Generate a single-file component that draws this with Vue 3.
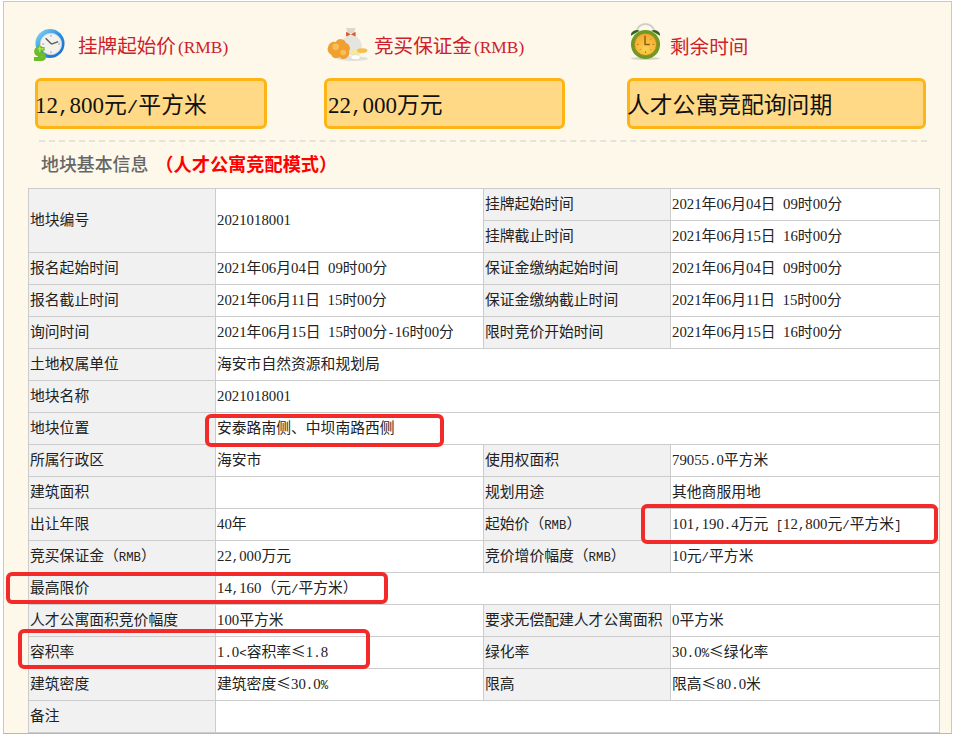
<script setup>
const split = (s) =>
  (s.match(/[0-9]+|[\x20-\x2f\x3a-\x7e]+|[^\x20-\x7e]+/g) || []).map((t) => ({
    t,
    kind: /^[0-9]/.test(t) ? 'dig' : /^[\x20-\x7e]/.test(t) ? 'mono' : 'cjk'
  }))

const stats = [
  { key: 'a', title: '挂牌起始价(RMB)', value: '12,800元/平方米' },
  { key: 'b', title: '竞买保证金(RMB)', value: '22,000万元' },
  { key: 'c', title: '剩余时间', value: '人才公寓竞配询问期' }
]

const L = (t, rowspan) => ({ t, label: true, rowspan })
const V = (t, colspan, rowspan) => ({ t, colspan, rowspan })

const rows = [
  [L('地块编号', 2), V('2021018001', 1, 2), L('挂牌起始时间'), V('2021年06月04日 09时00分')],
  [L('挂牌截止时间'), V('2021年06月15日 16时00分')],
  [L('报名起始时间'), V('2021年06月04日 09时00分'), L('保证金缴纳起始时间'), V('2021年06月04日 09时00分')],
  [L('报名截止时间'), V('2021年06月11日 15时00分'), L('保证金缴纳截止时间'), V('2021年06月11日 15时00分')],
  [L('询问时间'), V('2021年06月15日 15时00分-16时00分'), L('限时竞价开始时间'), V('2021年06月15日 16时00分')],
  [L('土地权属单位'), V('海安市自然资源和规划局', 3)],
  [L('地块名称'), V('2021018001', 3)],
  [L('地块位置'), V('安泰路南侧、中坝南路西侧', 3)],
  [L('所属行政区'), V('海安市'), L('使用权面积'), V('79055.0平方米')],
  [L('建筑面积'), V(''), L('规划用途'), V('其他商服用地')],
  [L('出让年限'), V('40年'), L('起始价（RMB）'), V('101,190.4万元 [12,800元/平方米]')],
  [L('竞买保证金（RMB）'), V('22,000万元'), L('竞价增价幅度（RMB）'), V('10元/平方米')],
  [L('最高限价'), V('14,160（元/平方米）', 3)],
  [L('人才公寓面积竞价幅度'), V('100平方米'), L('要求无偿配建人才公寓面积'), V('0平方米')],
  [L('容积率'), V('1.0<容积率≤1.8'), L('绿化率'), V('30.0%≤绿化率')],
  [L('建筑密度'), V('建筑密度≤30.0%'), L('限高'), V('限高≤80.0米')],
  [L('备注'), V('', 3)]
]
</script>

<template>
  <div class="page">
    <section class="panel">
      <div class="stats">
        <div v-for="s in stats" :key="s.key" class="stat" :class="'stat-' + s.key">
          <div class="stat-head">
            <svg v-if="s.key === 'a'" class="icon" width="34" height="32" viewBox="0 0 35 33">
              <defs>
                <linearGradient id="ringA" x1="0" y1="0" x2="1" y2="1">
                  <stop offset="0" stop-color="#8fe0f5" />
                  <stop offset=".5" stop-color="#2a8fe6" />
                  <stop offset="1" stop-color="#1565c8" />
                </linearGradient>
              </defs>
              <circle cx="18.500" cy="15" r="15" fill="url(#ringA)" />
              <circle cx="19.500" cy="15.500" r="11" fill="#f4f2ea" stroke="#c8d4dc" />
              <path d="M20 15.500l-6-6M20 15.500l7-2.500" stroke="#5a5a5a" stroke-width="1.400" fill="none" />
              <path d="M19.500 6v2M29 15.500h-2M19.500 25v-2M10.500 15.500h2" stroke="#999" fill="none" />
              <path d="M13 20.500H6a3 3 0 0 0 0 5.500h4a2.500 2.500 0 0 1 0 5H2M8 17.500V33" stroke="#6cbc2a" stroke-width="4" fill="none" />
              <path d="M12 20.500H6M8 18v6" stroke="#b5e56a" stroke-width="1.300" fill="none" />
            </svg>
            <svg v-else-if="s.key === 'b'" class="icon" width="42" height="34" viewBox="0 0 44 36">
              <ellipse cx="27" cy="33.500" rx="16" ry="2.500" fill="#e2e0d8" />
              <path d="M22 9c-6 3-9 9-7 16 2 6 18 6 21 0 2-7-1-13-7-16z" fill="#e6e4de" />
              <path d="M20 1h10l-2 6h-6z" fill="#dcd8cc" />
              <path d="M20 5l5 3 5-3v5l-5-2-5 2z" fill="#d9582a" />
              <path d="M1 21a6 6 0 0 1 8-5 6 6 0 0 1 11 1 6 6 0 0 1 3 9 6 6 0 0 1-10 6 6 6 0 0 1-9-3 6 6 0 0 1-3-8z" fill="#f0a030" />
              <circle cx="9" cy="21" r="3.500" fill="#f8be58" />
              <circle cx="17" cy="27" r="3" fill="#f8be58" />
              <ellipse cx="30" cy="27" rx="6" ry="3" fill="#f6e7a0" />
              <ellipse cx="37" cy="25" rx="5.500" ry="2.500" fill="#f5c04a" />
              <ellipse cx="30" cy="32" rx="5" ry="2.500" fill="#fff" stroke="#ccc" stroke-width=".5" />
            </svg>
            <svg v-else class="icon" width="31" height="37" viewBox="0 0 32 38">
              <defs>
                <radialGradient id="faceC" cx=".5" cy=".7" r=".7">
                  <stop offset="0" stop-color="#fbd24f" />
                  <stop offset="1" stop-color="#f2a72e" />
                </radialGradient>
              </defs>
              <ellipse cx="16" cy="36.500" rx="15" ry="1.500" fill="#d5d2c6" />
              <path d="M7 9a9 8 0 0 1 18 0" fill="none" stroke="#cfcfca" stroke-width="2" />
              <path d="M1 13a6 5 0 0 1 9-5zM31 13a6 5 0 0 0-9-5z" fill="#37641c" />
              <circle cx="16" cy="22" r="15" fill="#6c9a22" />
              <circle cx="16" cy="22" r="11.500" fill="url(#faceC)" stroke="#a8861c" />
              <path d="M15.500 13v9h5" stroke="#8c5f14" stroke-width="1.500" fill="none" />
              <path d="M16 31v-2M25 22h-2M7 22h2M22 28l-1-1M10 28l1-1M22 16l-1 1" stroke="#b8741a" fill="none" />
            </svg>
            <h3 class="stat-title"><span v-for="(p, i) in split(s.title)" :key="i" :class="{ 'title-lat': p.kind !== 'cjk' }">{{ p.t }}</span></h3>
          </div>
          <div class="stat-box"><span v-for="(p, i) in split(s.value)" :key="i" :class="'value-' + p.kind">{{ p.t }}</span></div>
        </div>
      </div>
      <div class="rule"></div>
      <h2 class="section"><span class="section-name">地块基本信息</span><span class="section-mode">（人才公寓竞配模式）</span></h2>
      <table class="info">
        <colgroup>
          <col class="c1" /><col class="c2" /><col class="c3" /><col class="c4" />
        </colgroup>
        <tbody>
          <tr v-for="(r, ri) in rows" :key="ri">
            <td v-for="(c, ci) in r" :key="ci" :class="{ label: c.label }" :colspan="c.colspan || 1" :rowspan="c.rowspan || 1"><span v-for="(p, i) in split(c.t)" :key="i" :class="p.kind">{{ p.t }}</span></td>
          </tr>
        </tbody>
      </table>
    </section>
    <div class="mark m1"></div>
    <div class="mark m2"></div>
    <div class="mark m3"></div>
    <div class="mark m4"></div>
  </div>
</template>

<style>
html, body { margin: 0; background: #fff; }
</style>

<style scoped>
.page {
  position: relative;
  width: 954px;
  height: 735px;
  overflow: hidden;
  background: #fff;
  font-family: "Noto Sans CJK SC", "Liberation Sans", sans-serif;
}
.panel {
  box-sizing: border-box;
  width: 949px;
  height: 733px;
  margin: 1px 0 0 3px;
  padding: 23px 10px 0 24px;
  background: #fdf8ea;
  border: 1px solid #cfc8b8;
  border-bottom-color: #b9b9a4;
}
.stats { display: flex; padding-left: 7px; }
.stat-a { width: 232px; margin-right: 57px; }
.stat-b { width: 241px; margin-right: 62px; }
.stat-c { width: 299px; }
.stat-head { display: flex; align-items: center; height: 42px; margin-bottom: 11px; }
.icon { flex: none; }
.stat-a .stat-head { gap: 12px; margin-left: -3px; }
.stat-b .stat-head { gap: 5px; margin-left: 3px; }
.stat-c .stat-head { gap: 9px; margin-left: 3px; }
.stat-a .icon { margin-bottom: 3px; }
.stat-b .icon { margin-bottom: 5px; }
.stat-c .icon { margin-bottom: 9px; }
.stat-title {
  margin: 0;
  font-size: 19.6px;
  font-weight: 400;
  line-height: 28px;
  color: #d0202a;
  white-space: nowrap;
}
.title-lat { font-family: "Liberation Serif", serif; font-size: 17.4px; margin-left: 2px; }
.stat-box {
  box-sizing: border-box;
  height: 51px;
  border: 3px solid #fdb515;
  border-radius: 6px;
  background: #ffd985;
  color: #111;
  font-size: 22.8px;
  line-height: 45px;
  white-space: nowrap;
}
.stat-a .stat-box { text-indent: -3px; }
.stat-b .stat-box { padding-left: 1px; }
.stat-c .stat-box { text-indent: -3px; }
.value-dig { font-family: "Liberation Serif", serif; font-size: 23px; line-height: 0; }
.value-mono { font-family: "Liberation Mono", monospace; font-size: 19.2px; line-height: 0; }
.rule {
  height: 0;
  margin: 11px 14px 0 11px;
  border-top: 2px dashed #e6e3d8;
}
.section {
  display: flex;
  align-items: center;
  height: 26px;
  margin: 8px 0 12px 13px;
  font-size: 18.2px;
  font-weight: 700;
  white-space: nowrap;
}
.section-name { color: #666; font-size: 17.9px; font-weight: 500; margin-right: 7px; }
.section-mode { color: #f00; }
.info {
  width: 911px;
  table-layout: fixed;
  border-collapse: collapse;
  background: #fff;
}
.c1 { width: 187px; }
.c2 { width: 268px; }
.c3 { width: 187px; }
.c4 { width: 269px; }
.info td {
  box-sizing: border-box;
  height: 32px;
  padding: 0 0 3px 1px;
  border: 1px solid #ccc;
  font-size: 14.8px;
  line-height: 20px;
  color: #222;
  white-space: nowrap;
  overflow: hidden;
}
.info td.label { background: #f1f1f1; }
.dig { font-family: "Liberation Serif", serif; font-size: 14.8px; line-height: 0; }
.mono { font-family: "Liberation Mono", monospace; font-size: 12.35px; line-height: 0; }
.mark {
  position: absolute;
  box-sizing: border-box;
  border: 4px solid #f22a2a;
  border-radius: 6px;
}
.m1 { left: 205px; top: 414px; width: 239px; height: 33px; }
.m2 { left: 641px; top: 504px; width: 297px; height: 40px; }
.m3 { left: 6px; top: 572px; width: 382px; height: 32px; }
.m4 { left: 18px; top: 629px; width: 352px; height: 40px; }
</style>
